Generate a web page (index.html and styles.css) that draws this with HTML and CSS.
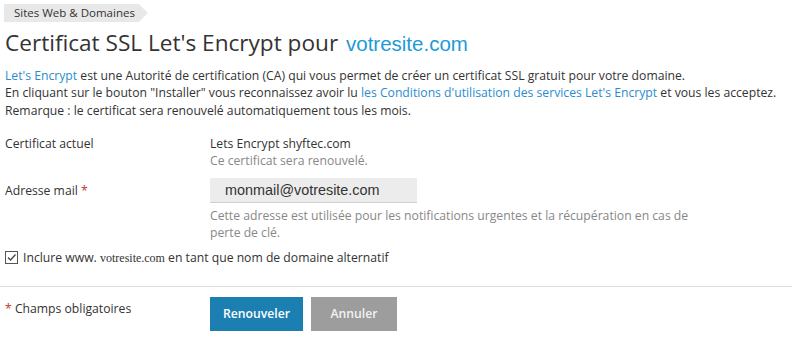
FILE: index.html
```html
<!DOCTYPE html>
<html lang="fr">
<head>
<meta charset="utf-8">
<title>Certificat SSL Let's Encrypt</title>
<link rel="stylesheet" href="styles.css">
</head>
<body>
<div class="page">
  <div class="breadcrumb">Sites Web &amp; Domaines</div>
  <h1 class="title">Certificat SSL Let's Encrypt pour <span class="domain">votresite.com</span></h1>
  <div class="intro">
    <p><a href="#" class="link">Let's Encrypt</a> est une Autorité de certification (CA) qui vous permet de créer un certificat SSL gratuit pour votre domaine.</p>
    <p>En cliquant sur le bouton "Installer" vous reconnaissez avoir lu <a href="#" class="link">les Conditions d'utilisation des services Let's Encrypt</a> et vous les acceptez.</p>
    <p>Remarque : le certificat sera renouvelé automatiquement tous les mois.</p>
  </div>

  <div class="form">
    <div class="row row-cert">
      <div class="label">Certificat actuel</div>
      <div class="field">
        <div class="value">Lets Encrypt shyftec.com</div>
        <div class="hint">Ce certificat sera renouvelé.</div>
      </div>
    </div>
    <div class="row row-mail">
      <div class="label label-mail">Adresse mail <span class="req">*</span></div>
      <div class="field">
        <input class="input" type="text" value="monmail@votresite.com">
        <div class="hint hint-mail">Cette adresse est utilisée pour les notifications urgentes et la récupération en cas de perte de clé.</div>
      </div>
    </div>
    <label class="check-row">
      <span class="checkbox"><svg width="11" height="11" viewBox="0 0 11 11"><path d="M2 5.5 L4.5 8 L9.5 2.5" fill="none" stroke="#444" stroke-width="1.3"/></svg></span>
      <span>Inclure www. <span class="serif">votresite.com</span> en tant que nom de domaine alternatif</span>
    </label>
  </div>

  <div class="footer">
    <div class="label required-note"><span class="req">*</span> Champs obligatoires</div>
    <div class="buttons">
      <button class="btn btn-primary">Renouveler</button>
      <button class="btn btn-cancel">Annuler</button>
    </div>
  </div>
</div>
</body>
</html>
```

FILE: styles.css
```css
html, body {
  margin: 0;
  background: #fff;
}
body {
  font-family: "Open Sans", "DejaVu Sans", sans-serif;
  font-size: 12.2px;
  color: #333;
}
.page {
  padding: 4px 8px 0 5px;
}
.breadcrumb {
  display: inline-block;
  margin-left: -1px;
  height: 18px;
  line-height: 18px;
  padding: 0 13px 0 10px;
  background: #e8e8e8;
  font-size: 11.5px;
  color: #333;
  clip-path: polygon(0 0, calc(100% - 9px) 0, 100% 50%, calc(100% - 9px) 100%, 0 100%);
}
.title {
  margin: 6px 0 0;
  font-size: 22.6px;
  font-weight: 400;
  line-height: 30px;
  color: #333;
}
.domain {
  font-family: "Liberation Sans", Arial, sans-serif;
  font-size: 20.5px;
  color: #1e9ad6;
  margin-left: 2px;
}
.intro {
  margin-top: 8px;
  line-height: 17.3px;
}
.intro p {
  margin: 0;
}
.link {
  color: #2a8ccf;
  text-decoration: none;
}
.form {
  margin-top: 16px;
}
.row {
  display: grid;
  grid-template-columns: 205px 1fr;
  line-height: 17px;
}
.row-mail {
  margin-top: 9px;
}
.label-mail {
  padding-top: 4px;
}
.hint {
  color: #888;
}
.req {
  color: #c0392b;
}
.input {
  display: block;
  box-sizing: border-box;
  width: 207px;
  height: 25px;
  margin: 0;
  padding: 0 0 0 15px;
  border: 0;
  border-bottom: 1px solid #cfcfcf;
  background: #ececec;
  font-family: "Liberation Sans", Arial, sans-serif;
  font-size: 14.4px;
  color: #333;
  outline: none;
}
.hint-mail {
  margin-top: 4px;
  max-width: 485px;
}
.check-row {
  display: flex;
  align-items: center;
  gap: 5px;
  margin-top: 8px;
  line-height: 17px;
}
.checkbox {
  display: flex;
  align-items: center;
  justify-content: center;
  box-sizing: border-box;
  width: 13px;
  height: 13px;
  border: 1px solid #555;
  background: #fff;
}
.serif {
  font-family: "Liberation Serif", "Times New Roman", serif;
  font-size: 12px;
}
.footer {
  display: grid;
  grid-template-columns: 205px 1fr;
  margin-top: 19px;
  margin-left: -5px;
  padding: 10px 0 0 5px;
  border-top: 1px solid #ddd;
  line-height: 17px;
}
.required-note {
  padding-top: 3px;
}
.buttons {
  display: flex;
  gap: 8px;
}
.btn {
  height: 34px;
  border: 0;
  margin: 0;
  font-family: "Open Sans", sans-serif;
  font-size: 12.2px;
  font-weight: 600;
  cursor: pointer;
}
.btn-primary {
  width: 93px;
  background: #1b7fb1;
  color: #fff;
}
.btn-cancel {
  width: 86px;
  background: #9d9d9d;
  color: #f2f2f2;
}
```
